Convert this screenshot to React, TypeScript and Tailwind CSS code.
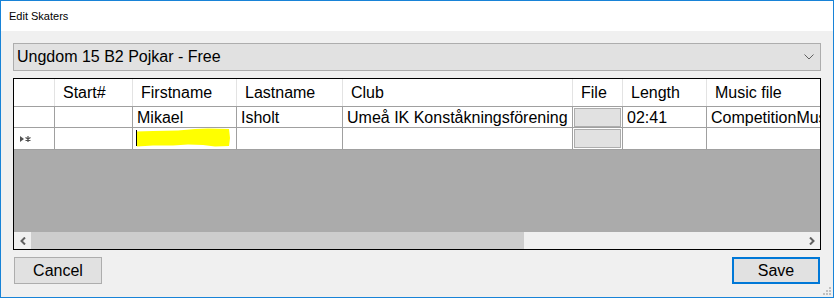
const cols = [
  { name: "Start#", w: "w-[78px]" },
  { name: "Firstname", w: "w-[104px]" },
  { name: "Lastname", w: "w-[106px]" },
  { name: "Club", w: "w-[230px]" },
  { name: "File", w: "w-[50px]" },
  { name: "Length", w: "w-[84px]" },
];

function FileButton() {
  return <div className="h-[19px] w-[47px] ml-px border border-[#adadad] bg-[#e1e1e1]" />;
}

function NewRowGlyph() {
  return (
    <svg width="12" height="8" viewBox="0 0 12 8" className="ml-[6px]">
      <path d="M0 1 L4 4 L0 7 Z" fill="#505050" />
      <path d="M8 1 V7 M5.5 2.5 L10.5 5.5 M10.5 2.5 L5.5 5.5" stroke="#505050" strokeWidth="1.2" />
    </svg>
  );
}

export default function App() {
  return (
    <div className="w-[834px] h-[298px] border border-[#1883d7] flex flex-col bg-[#f0f0f0] font-['Liberation_Sans',Arial,sans-serif] text-black overflow-hidden">
      <div className="h-[30px] bg-white flex items-center pl-2 text-[11px]">Edit Skaters</div>

      <div className="flex-1 flex flex-col pl-3 pt-3 relative">
        {/* combobox */}
        <div className="w-[808px] h-[28px] border border-[#adadad] bg-[#e1e1e1] flex items-center justify-between pl-[3px] pr-[6px] text-[16px]">
          <span>Ungdom 15 B2 Pojkar - Free</span>
          <svg width="10" height="6" viewBox="0 0 10 6">
            <path d="M0.5 0.5 L5 5 L9.5 0.5" stroke="#606060" fill="none" strokeWidth="1" />
          </svg>
        </div>

        {/* grid */}
        <div className="mt-[7px] w-[808px] h-[172px] border border-black flex flex-col bg-[#ababab] text-[16px]">
          <div className="h-[28px] flex bg-white border-b border-[#a0a0a0] shrink-0">
            <div className="w-[41px] border-r border-[#e3e3e3] shrink-0" />
            {cols.map((c) => (
              <div key={c.name} className={`${c.w} shrink-0 border-r border-[#e3e3e3] flex items-center pl-2 pt-px`}>
                {c.name}
              </div>
            ))}
            <div className="flex-1 flex items-center pl-2 pt-px whitespace-nowrap overflow-hidden">Music file</div>
          </div>

          <div className="h-[21px] flex bg-white border-b border-[#a0a0a0] shrink-0">
            <div className="w-[41px] border-r border-[#a0a0a0] shrink-0" />
            <div className="w-[78px] border-r border-[#a0a0a0] shrink-0" />
            <div className="w-[104px] border-r border-[#a0a0a0] shrink-0 flex items-center pl-[4px] pt-px">Mikael</div>
            <div className="w-[106px] border-r border-[#a0a0a0] shrink-0 flex items-center pl-[4px] pt-px">Isholt</div>
            <div className="w-[230px] border-r border-[#a0a0a0] shrink-0 flex items-center pl-[4px] pt-px whitespace-nowrap overflow-hidden">
              Umeå IK Konståkningsförening
            </div>
            <div className="w-[50px] border-r border-[#a0a0a0] shrink-0 flex items-center">
              <FileButton />
            </div>
            <div className="w-[84px] border-r border-[#a0a0a0] shrink-0 flex items-center pl-[4px] pt-px">02:41</div>
            <div className="flex-1 flex items-center pl-[4px] pt-px whitespace-nowrap overflow-hidden">CompetitionMusic</div>
          </div>

          <div className="h-[22px] flex bg-white border-b border-[#a0a0a0] shrink-0">
            <div className="w-[41px] border-r border-[#a0a0a0] shrink-0 flex items-center">
              <NewRowGlyph />
            </div>
            <div className="w-[78px] border-r border-[#a0a0a0] shrink-0" />
            <div className="w-[104px] border-r border-[#a0a0a0] shrink-0 relative">
              <svg width="104" height="21" viewBox="0 0 104 21" className="absolute left-0 top-0">
                <path
                  d="M3 3.5 L20 3 L45 2.5 L62 1 L75 0.5 L96 1 L97 10 L96 18 L82 18.5 L70 17 L55 16.5 L40 17.5 L20 17.5 L4 18.5 Z"
                  fill="#ffff00"
                />
                <path d="M3.5 2 V18" stroke="#000" strokeWidth="1" />
              </svg>
            </div>
            <div className="w-[106px] border-r border-[#a0a0a0] shrink-0" />
            <div className="w-[230px] border-r border-[#a0a0a0] shrink-0" />
            <div className="w-[50px] border-r border-[#a0a0a0] shrink-0 flex items-center">
              <FileButton />
            </div>
            <div className="w-[84px] border-r border-[#a0a0a0] shrink-0" />
            <div className="flex-1" />
          </div>

          <div className="flex-1" />

          {/* horizontal scrollbar */}
          <div className="h-[17px] flex bg-[#f0f0f0] shrink-0 items-center">
            <div className="w-[17px] h-full flex items-center justify-center">
              <svg width="6" height="8" viewBox="0 0 6 8">
                <path d="M5 0.5 L1.5 4 L5 7.5" stroke="#606060" strokeWidth="2" fill="none" />
              </svg>
            </div>
            <div className="w-[493px] h-full bg-[#cdcdcd]" />
            <div className="flex-1" />
            <div className="w-[17px] h-full flex items-center justify-center">
              <svg width="6" height="8" viewBox="0 0 6 8">
                <path d="M1 0.5 L4.5 4 L1 7.5" stroke="#606060" strokeWidth="2" fill="none" />
              </svg>
            </div>
          </div>
        </div>

        {/* buttons */}
        <div className="mt-[7px] w-[807px] flex justify-between pl-px text-[16px]">
          <button className="w-[88px] h-[27px] border border-[#adadad] bg-[#e1e1e1] flex items-center justify-center">
            Cancel
          </button>
          <button className="w-[88px] h-[27px] border-2 border-[#0078d7] bg-[#e1e1e1] flex items-center justify-center">
            Save
          </button>
        </div>

        <svg width="9" height="9" viewBox="0 0 9 9" className="absolute right-[1px] bottom-[1px]">
          <rect x="6" y="0" width="2" height="2" fill="#c0c0c0" />
          <rect x="3" y="3" width="2" height="2" fill="#c0c0c0" />
          <rect x="6" y="3" width="2" height="2" fill="#c0c0c0" />
          <rect x="0" y="6" width="2" height="2" fill="#c0c0c0" />
          <rect x="3" y="6" width="2" height="2" fill="#c0c0c0" />
          <rect x="6" y="6" width="2" height="2" fill="#c0c0c0" />
        </svg>
      </div>
    </div>
  );
}
